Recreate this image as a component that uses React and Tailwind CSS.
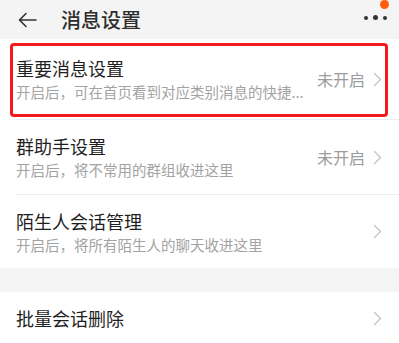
import React from "react";

function Chevron() {
  return (
    <svg width="9" height="15" viewBox="0 0 9 15" className="shrink-0">
      <path d="M1.5 1.5 L7.5 7.5 L1.5 13.5" fill="none" stroke="#c4c4c4" strokeWidth="1.4" strokeLinecap="round" strokeLinejoin="round" />
    </svg>
  );
}

function Row({ title, desc, value, height, last, highlight }) {
  return (
    <div className={"relative bg-white " + height}>
      <div className={"ml-4 h-full flex items-center pr-[17px] " + (last ? "" : "border-b border-[#ededed]")}>
        <div className="flex-1 min-w-0">
          <div className="text-[18px] leading-[24px] text-[#1f1f1f]">{title}</div>
          {desc && (
            <div className="mt-0.5 text-[14.5px] leading-[20px] text-[#a3a3a3] whitespace-nowrap">{desc}</div>
          )}
        </div>
        <div className="flex items-center gap-2 pl-2">
          {value && <span className="text-[16px] text-[#9c9c9c]">{value}</span>}
          <Chevron />
        </div>
      </div>
      {highlight && (
        <div className="absolute left-[10px] right-[11px] top-[4px] bottom-[3px] border-[3px] border-[#f5191c] rounded-[4px] pointer-events-none" />
      )}
    </div>
  );
}

export default function App() {
  return (
    <div
      className="w-[399px] h-[343px] overflow-hidden bg-white"
      style={{ fontFamily: '"Noto Sans CJK SC", "Noto Sans", sans-serif' }}
    >
      <div className="relative h-[39px] bg-[#f4f4f4] flex items-center">
        <svg width="20" height="16" viewBox="0 0 20 16" className="ml-[18px]">
          <path d="M18 8 H2 M8 1.5 L1.5 8 L8 14.5" fill="none" stroke="#333" strokeWidth="1.6" strokeLinecap="round" strokeLinejoin="round" />
        </svg>
        <span className="ml-[23px] text-[20px] text-[#2e2e2e] font-medium">消息设置</span>
        <div className="ml-auto mr-[12px] flex items-center gap-[5px] mt-[-4px]">
          <span className="w-[4px] h-[4px] rounded-full bg-[#333]" />
          <span className="w-[5px] h-[5px] rounded-full bg-[#333]" />
          <span className="w-[4px] h-[4px] rounded-full bg-[#333]" />
        </div>
        <span className="absolute right-[10px] top-0 w-[9px] h-[9px] rounded-full bg-[#ff5d0a]" />
      </div>

      <Row
        title="重要消息设置"
        desc="开启后，可在首页看到对应类别消息的快捷..."
        value="未开启"
        height="h-[81px]"
        highlight
      />
      <Row title="群助手设置" desc="开启后，将不常用的群组收进这里" value="未开启" height="h-[75px]" />
      <Row title="陌生人会话管理" desc="开启后，将所有陌生人的聊天收进这里" height="h-[73px]" last />

      <div className="h-[24px] bg-[#f5f5f5]" />

      <Row title="批量会话删除" height="h-[52px]" last />
    </div>
  );
}
